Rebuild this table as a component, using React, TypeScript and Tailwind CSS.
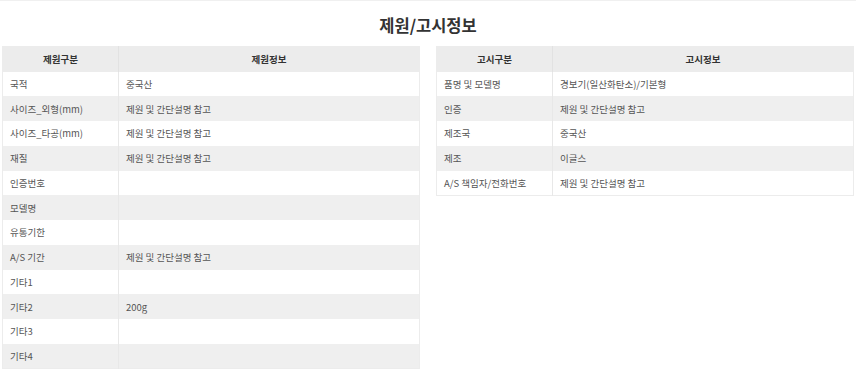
import React from 'react';

const SPEC_ROWS: [string, string][] = [
  ['국적', '중국산'],
  ['사이즈_외형(mm)', '제원 및 간단설명 참고'],
  ['사이즈_타공(mm)', '제원 및 간단설명 참고'],
  ['재질', '제원 및 간단설명 참고'],
  ['인증번호', ''],
  ['모델명', ''],
  ['유통기한', ''],
  ['A/S 기간', '제원 및 간단설명 참고'],
  ['기타1', ''],
  ['기타2', '200g'],
  ['기타3', ''],
  ['기타4', ''],
];

const NOTICE_ROWS: [string, string][] = [
  ['품명 및 모델명', '경보기(일산화탄소)/기본형'],
  ['인증', '제원 및 간단설명 참고'],
  ['제조국', '중국산'],
  ['제조', '이글스'],
  ['A/S 책임자/전화번호', '제원 및 간단설명 참고'],
];

function InfoTable({ head, rows }: { head: [string, string]; rows: [string, string][] }) {
  return (
    <table className="w-[418px] table-fixed border-collapse border border-[#ececec] text-[9.5px] text-[#555]">
      <colgroup>
        <col className="w-[116px]" />
        <col />
      </colgroup>
      <thead>
        <tr className="h-[25px] bg-[#ececec] text-[#333]">
          <th className="border-r border-[#e2e2e2] font-bold">{head[0]}</th>
          <th className="font-bold">{head[1]}</th>
        </tr>
      </thead>
      <tbody>
        {rows.map(([k, v], i) => (
          <tr key={k} className={`h-[24.75px] ${i % 2 === 1 ? 'bg-[#efefef]' : 'bg-white'}`}>
            <td className="border-r border-[#e8e8e8] px-[7px]">{k}</td>
            <td className="px-[7px]">{v}</td>
          </tr>
        ))}
      </tbody>
    </table>
  );
}

export default function App() {
  return (
    <div
      className="w-[860px] h-[383px] bg-white"
      style={{ fontFamily: '"Noto Sans CJK KR", "Noto Sans", sans-serif' }}
    >
      <div className="w-[856px] border-t border-[#f0f0f0]">
        <h2 className="h-[45px] pt-[12.5px] text-center text-[16.5px] font-bold leading-[22px] text-[#333]">
          제원/고시정보
        </h2>
        <div className="flex items-start gap-[16px] pl-[2px]">
          <InfoTable head={['제원구분', '제원정보']} rows={SPEC_ROWS} />
          <InfoTable head={['고시구분', '고시정보']} rows={NOTICE_ROWS} />
        </div>
      </div>
    </div>
  );
}
